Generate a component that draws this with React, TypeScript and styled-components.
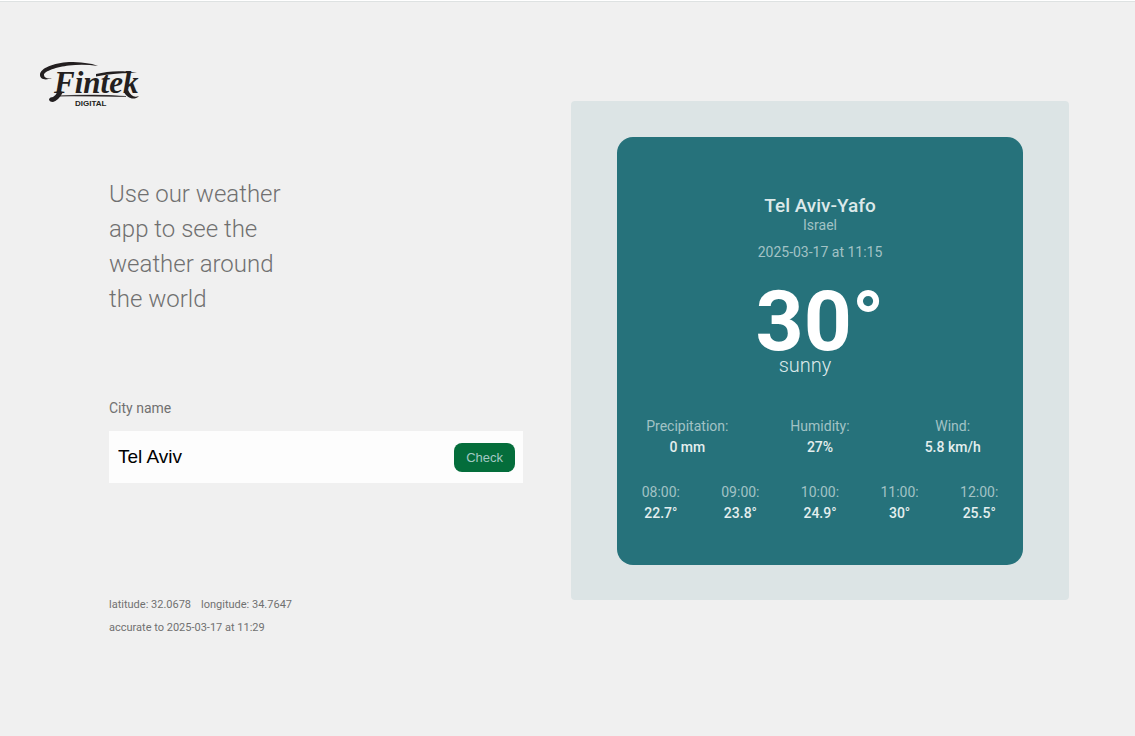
import React, { useState } from "react";
import styled, { createGlobalStyle } from "styled-components";

const GlobalStyle = createGlobalStyle`
  * { box-sizing: border-box; }
  body {
    margin: 0;
    background: #f0f0f0;
    color: #707070;
    font-family: Roboto, "Liberation Sans", sans-serif;
    font-size: 14px;
    line-height: 21px;
  }
  h1, h2, p, dl, dd { margin: 0; }
`;

const Page = styled.div`
  min-height: 100vh;
  border-top: 1px solid #ffffff;
  box-shadow: inset 0 1px 0 #dee2e2;
`;

const Layout = styled.main`
  display: grid;
  grid-template-columns: 483fr 498fr;
  column-gap: 48px;
  align-items: start;
  padding: 60px 66px 60px 40px;
`;

const Content = styled.div`
  padding: 68px 0 0 69px;
`;

const LogoLink = styled.a`
  display: block;
  width: 100px;
  height: 48px;
  color: #231f20;
`;

const Intro = styled.h1`
  max-width: 200px;
  margin-bottom: 81px;
  font-size: 24px;
  font-weight: 300;
  line-height: 35px;
`;

const Label = styled.label`
  display: block;
  margin-bottom: 12px;
`;

const SearchBar = styled.div`
  display: flex;
  align-items: center;
  height: 52px;
  padding: 0 8px;
  background: #fdfdfd;
`;

const CityInput = styled.input`
  flex: 1;
  min-width: 0;
  padding: 0 1px;
  border: 0;
  outline: 0;
  background: transparent;
  color: #000000;
  font: 400 19px/28px "Liberation Sans", sans-serif;
`;

const CheckButton = styled.button`
  height: 29px;
  padding: 0 12px;
  border: 0;
  border-radius: 8px;
  background: #046d3b;
  color: #a3c9c4;
  font: 400 13px/21px "Liberation Sans", sans-serif;
`;

const Meta = styled.div`
  margin-top: 110px;
  font-size: 11px;
  line-height: 23px;
`;

const Coordinates = styled.p`
  display: flex;
  gap: 10px;
`;

const Panel = styled.section`
  margin-top: 40px;
  padding: 36px 46px 35px;
  border-radius: 4px;
  background: #dce4e5;
`;

const Card = styled.article`
  padding: 59px 4px 41px;
  border-radius: 16px;
  background: #26727b;
  color: #a2c2c5;
  text-align: center;
`;

const City = styled.h2`
  color: #dce9ea;
  font-size: 19px;
  font-weight: 500;
  line-height: 20px;
`;

const Country = styled.p`
  line-height: 18px;
`;

const Time = styled.p`
  margin-top: 8px;
`;

const Temperature = styled.p`
  margin-top: 28px;
  color: #ffffff;
  font-size: 84px;
  font-weight: 700;
  line-height: 62px;
`;

const Condition = styled.p`
  padding-right: 30px;
  color: #dce9ea;
  font-size: 20px;
  font-weight: 300;
  line-height: 24px;
`;

const Stats = styled.dl<{ $columns: number; $gap: number }>`
  display: grid;
  grid-template-columns: repeat(${(p) => p.$columns}, 1fr);
  margin-top: ${(p) => p.$gap}px;
`;

const Value = styled.dd`
  color: #e4eeee;
  font-weight: 500;
`;

const details = [
  ["Precipitation:", "0 mm"],
  ["Humidity:", "27%"],
  ["Wind:", "5.8 km/h"],
];

const hours = [
  ["08:00:", "22.7°"],
  ["09:00:", "23.8°"],
  ["10:00:", "24.9°"],
  ["11:00:", "30°"],
  ["12:00:", "25.5°"],
];

function StatList({ items, gap }: { items: string[][]; gap: number }) {
  return (
    <Stats $columns={items.length} $gap={gap}>
      {items.map(([name, value]) => (
        <div key={name}>
          <dt>{name}</dt>
          <Value>{value}</Value>
        </div>
      ))}
    </Stats>
  );
}

function Logo() {
  return (
    <svg width="100" height="48" viewBox="0 0 100 48" fill="currentColor">
      <path d="M12 17C5 20 0 18 0 14C0 7 14 2 29 1C40 1 51 2 58 5C48 3.500 38 3.500 29 4.500C17 6 4 10 4 14C4 17 8 18 12 17Z" />
      <text x="14" y="32" fontFamily="Liberation Serif, serif" fontSize="31" fontStyle="italic" fontWeight="700">Fintek</text>
      <path d="M23 31Q19 39 13 41Q9 41 9 38Q10 36 13 36Q16 34 18 30Z" />
      <path d="M56 13C68 10 82 9 97 12C83 11.500 69 13 56 15.500Z" />
      <path d="M88 29C91 35 94 37 99 35C94 40 87 37 84 31Z" />
      <path d="M18 35Q56 33 86 35.500Q50 34.800 18 35Z" stroke="currentColor" strokeWidth="0.500" />
      <text x="35" y="45" fontFamily="Liberation Sans, sans-serif" fontSize="8" fontWeight="700">DIGITAL</text>
    </svg>
  );
}

export default function App() {
  const [city, setCity] = useState("Tel Aviv");
  return (
    <>
      <GlobalStyle />
      <Page>
        <Layout>
          <div>
            <LogoLink href="#" aria-label="Fintek Digital">
              <Logo />
            </LogoLink>
            <Content>
              <Intro>Use our weather app to see the weather around the world</Intro>
              <form onSubmit={(e) => e.preventDefault()}>
                <Label htmlFor="city">City name</Label>
                <SearchBar>
                  <CityInput id="city" value={city} onChange={(e) => setCity(e.target.value)} />
                  <CheckButton type="submit">Check</CheckButton>
                </SearchBar>
              </form>
              <Meta>
                <Coordinates>
                  <span>latitude: 32.0678</span>
                  <span>longitude: 34.7647</span>
                </Coordinates>
                <p>accurate to 2025-03-17 at 11:29</p>
              </Meta>
            </Content>
          </div>
          <Panel>
            <Card>
              <City>Tel Aviv-Yafo</City>
              <Country>Israel</Country>
              <Time>2025-03-17 at 11:15</Time>
              <Temperature>30°</Temperature>
              <Condition>sunny</Condition>
              <StatList items={details} gap={39} />
              <StatList items={hours} gap={24} />
            </Card>
          </Panel>
        </Layout>
      </Page>
    </>
  );
}
